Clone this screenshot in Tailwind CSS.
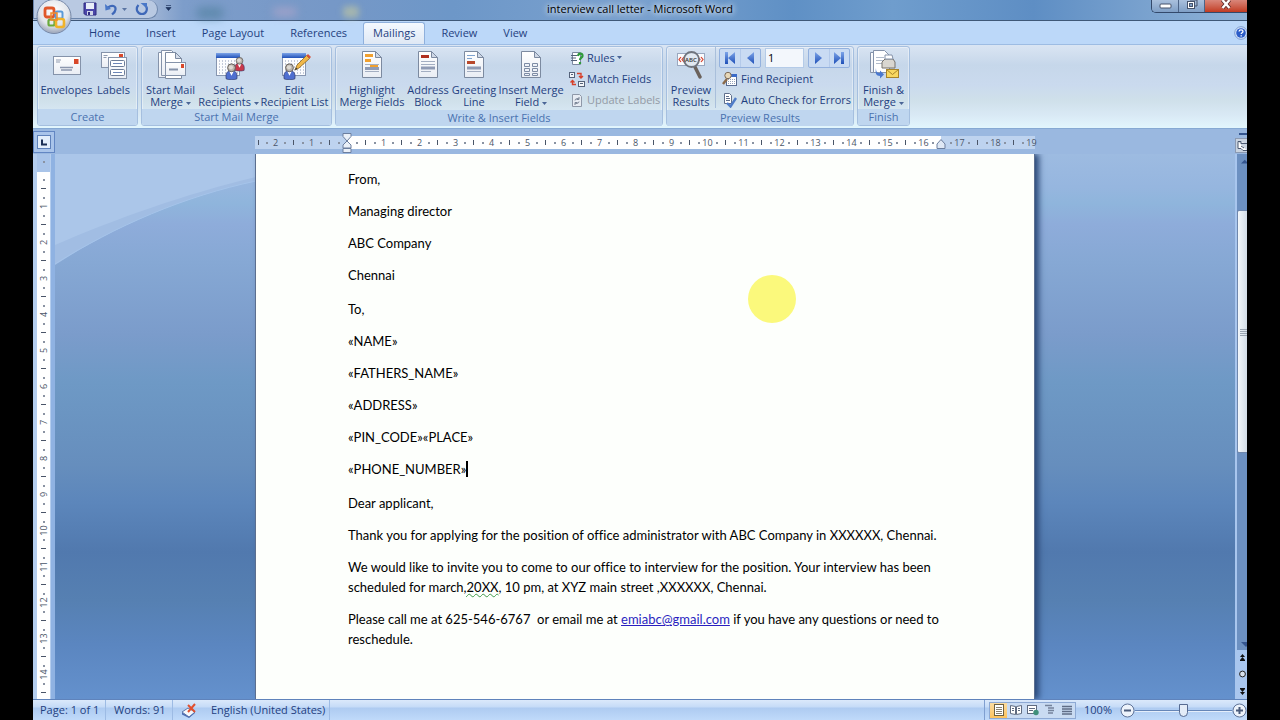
<!DOCTYPE html>
<html lang="en">
<head>
    <meta charset="UTF-8">
    <meta name="viewport" content="width=device-width, initial-scale=1.0">
    <title>interview call letter - Microsoft Word</title>
    <script src="https://cdn.jsdelivr.net/npm/@tailwindcss/browser@4"></script>
</head>
<body class="bg-black px-[33px] font-['Open_Sans','Noto_Sans',sans-serif] text-[11px] text-[#1f3f7f]">

    <!-- Shared icon parts -->
    <svg class="absolute size-0">
        <defs>
            <linearGradient id="paper" x1="0" y1="0" x2="0" y2="1"><stop offset="0" stop-color="#fff"/><stop offset="1" stop-color="#e9edf4"/></linearGradient>
            <linearGradient id="blue" x1="0" y1="0" x2="0" y2="1"><stop offset="0" stop-color="#7da4e8"/><stop offset="1" stop-color="#1f50b8"/></linearGradient>
            <symbol id="page" viewBox="0 0 32 32">
                <path d="M6.500 2.500h13l6 6v20h-19z" fill="url(#paper)" stroke="#7c8aa0"/>
                <path d="M19.500 2.500v6h6z" fill="#cfd8e6" stroke="#7c8aa0"/>
            </symbol>
            <symbol id="person" viewBox="0 0 12 16">
                <path d="M1 15c-1-5 1-8 5-8s6 3 5 8c-3 1-7 1-10 0z" fill="currentColor" stroke="#2a3566" stroke-width=".6"/>
                <path d="M4 8l2 4 2-4z" fill="#fff"/>
                <circle cx="6" cy="4.500" r="3.700" fill="#b9b3ac" stroke="#5b554f" stroke-width=".8"/>
                <circle cx="5.500" cy="4" r="2" fill="#dedad4"/>
            </symbol>
            <symbol id="calendar" viewBox="0 0 32 32">
                <rect x="3.500" y="4.500" width="23" height="22" fill="#fbfcfe" stroke="#8796b0"/>
                <rect x="3" y="4" width="24" height="5" fill="url(#blue)"/>
                <path d="M6 12h20M6 15h20M6 18h20M6 21h20M6 24h20" stroke="#8b99b5" stroke-dasharray="1 2"/>
            </symbol>
        </defs>
    </svg>

    <div class="flex h-screen flex-col overflow-hidden bg-[#9ab8e0]">

        <!-- Title bar -->
        <header class="relative flex h-[21px] shrink-0 items-start justify-center border-b border-[#3f5878] bg-[linear-gradient(90deg,#aebfda_0,#a9bbd8_110px,#7d9dca_150px,#7698c7_300px,#6d97c8_420px,#7ba2cf_600px,#5f90c5_760px,#6f9dcd_860px,#5e8ec4_1000px,#7ba3cf_1120px,#8fb2d6_1214px)]">
            <div class="absolute left-[163px] top-[7px] h-3 w-7 rounded-full bg-[#4f7f9c]/60 blur-[4px]"></div>
            <div class="absolute left-[240px] top-[8px] h-2 w-6 rounded-full bg-[#b3a7cb]/70 blur-[4px]"></div>
            <div class="absolute left-[310px] top-[6px] h-3 w-4 rounded-sm bg-[#c5c9a0]/60 blur-[3px]"></div>
            <div class="absolute left-0 top-0 flex h-[19px] items-center rounded-r-[12px] border border-t-0 border-[#6d86ac] bg-[#b9c9e2] pl-[49px] pr-2">
                <button aria-label="Save" class="mr-[7px]">
                    <svg width="14" height="14" viewBox="0 0 14 14"><path d="M1 1h12v12H2.500L1 11.500z" fill="#4b46a8" stroke="#2f2b80"/><rect x="3" y="1" width="8" height="6" fill="#e9eef8"/><rect x="4" y="9" width="6" height="4" fill="#cfd5e8"/><rect x="5" y="10" width="2" height="3" fill="#2f2b80"/></svg>
                </button>
                <button aria-label="Undo" class="mr-1">
                    <svg width="14" height="14" viewBox="0 0 14 14" fill="none"><path d="M4 5.500c4-3 8-1.500 7.500 2S8.500 12 8 12.500" stroke="#3f68b8" stroke-width="2.200"/><path d="M1 2l.5 6.500L7 7z" fill="#4a78c8"/></svg>
                </button>
                <button aria-label="Undo list" class="mr-2"><svg width="5" height="3" viewBox="0 0 5 3"><path d="M0 0h5L2.500 3z" fill="#5a74a3"/></svg></button>
                <button aria-label="Redo">
                    <svg width="14" height="14" viewBox="0 0 14 14" fill="none"><path d="M3.500 3C0 7 2.500 12 7 12s6.500-5.500 3-9" stroke="#3f68b8" stroke-width="2.200"/><path d="M5.500 1H12v5.500z" fill="#4a78c8"/></svg>
                </button>
            </div>
            <button aria-label="Customize Quick Access Toolbar" class="absolute left-[132px] top-[5px]">
                <svg width="7" height="6" viewBox="0 0 7 6"><path d="M1 .5h5M1 2.500h5L3.500 5.500z" fill="#1f355e" stroke="#1f355e" stroke-width=".7"/></svg>
            </button>
            <h1 class="leading-[18px] text-black [text-shadow:0_0_6px_#fff,0_0_6px_#dfe9f6]">interview call letter - Microsoft Word</h1>
            <div class="absolute right-0 top-0 flex h-[13px] overflow-hidden rounded-bl-[5px] border border-r-0 border-t-0 border-[#33496b]">
                <button aria-label="Minimize" class="flex w-[27px] items-start justify-center border-r border-[#4c6488] bg-linear-to-b from-[#a9c0dd] to-[#7f9fc6] pt-[3px]">
                    <svg width="13" height="6" viewBox="0 0 13 6"><rect x="1" y="1" width="11" height="4" rx="1" fill="#fff" stroke="#46536b"/></svg>
                </button>
                <button aria-label="Restore" class="flex w-[26px] items-start justify-center border-r border-[#4c6488] bg-linear-to-b from-[#a9c0dd] to-[#7f9fc6]">
                    <svg width="12" height="10" viewBox="0 0 12 10"><path d="M4 0h7v6H9" fill="none" stroke="#46536b"/><rect x="1.500" y="1.500" width="7" height="7" fill="#fff" stroke="#46536b"/><rect x="3.500" y="3.500" width="3" height="3" fill="#7f9fc6" stroke="#46536b"/></svg>
                </button>
                <button aria-label="Close" class="flex w-[42px] items-start justify-center bg-linear-to-b from-[#d9867a] to-[#c13a20]">
                    <svg width="12" height="10" viewBox="0 0 12 10"><path d="M2.500 0l7 8M9.500 0l-7 8" stroke="#5b2a2a" stroke-width="4"/><path d="M2.500 0l7 8M9.500 0l-7 8" stroke="#fff" stroke-width="2.400"/></svg>
                </button>
            </div>
            <button aria-label="Office Button" class="absolute left-[3px] top-[-2px] z-10">
                <svg width="36" height="37" viewBox="0 0 36 37" fill="none">
                    <defs><radialGradient id="orb" cx=".5" cy=".35" r=".6"><stop offset="0" stop-color="#fff"/><stop offset=".7" stop-color="#e3e6ec"/><stop offset="1" stop-color="#a8b1c2"/></radialGradient></defs>
                    <circle cx="18" cy="18.500" r="17" fill="url(#orb)" stroke="#7688a8"/>
                    <rect x="9" y="10" width="9" height="9" rx="2" stroke="#e0582a" stroke-width="2.800"/>
                    <rect x="19.500" y="13.500" width="7" height="7" rx="1.500" stroke="#5a9ad8" stroke-width="2"/>
                    <rect x="12.500" y="21.500" width="6" height="6" rx="1.500" stroke="#6aa93c" stroke-width="2.200"/>
                    <rect x="20" y="21" width="8" height="8" rx="2" stroke="#f0b32a" stroke-width="2.600"/>
                    <path d="M15 15h6v7h-6z" stroke="#f08a2a" stroke-width="1.500"/>
                </svg>
            </button>
        </header>

        <!-- Ribbon tabs -->
        <nav class="flex h-[23px] shrink-0 items-end bg-[#bcd8f9] pl-[43px]">
            <button class="h-[22px] px-[13px]">Home</button>
            <button class="h-[22px] px-[13px]">Insert</button>
            <button class="h-[22px] px-[13px]">Page Layout</button>
            <button class="h-[22px] px-[13px]">References</button>
            <button class="mx-[3px] h-[22px] rounded-t-[3px] border border-b-0 border-[#8fb0dc] bg-linear-to-b from-[#f4f9ff] to-[#dfe8f4] px-[9px]">Mailings</button>
            <button class="h-[22px] px-[13px]">Review</button>
            <button class="h-[22px] px-[13px]">View</button>
            <button aria-label="Help" class="-mr-px ml-auto self-center">
                <svg width="14" height="14" viewBox="0 0 14 14"><circle cx="7" cy="7" r="6.300" fill="#dbe8fa" stroke="#7b9bd0"/><circle cx="7" cy="7" r="4.800" fill="#2b5cc8"/><path d="M5 5.500c.3-2.300 4-2 4 0 0 1.200-1.800 1.300-1.800 2.500M7.200 9.200v1.300" fill="none" stroke="#fff" stroke-width="1.300"/></svg>
            </button>
        </nav>

        <!-- Ribbon -->
        <div class="flex h-[85px] shrink-0 gap-[3px] whitespace-nowrap border-b border-t border-b-[#86a9d3] border-t-[#9dbce3] bg-[linear-gradient(#dae5f3_0,#c6d7ea_20px,#cadaee_40px,#cfe0ea_55px,#d9e9f5_70px,#e2f6fd_83px)] px-[4px] pb-[2px] pt-px leading-3">
            <section class="flex w-[101px] flex-col rounded-[3px] border border-[#a5bfdf] shadow-[inset_0_0_0_1px_#ffffff66]">
                <div class="flex flex-1 items-start justify-center">
                    <button class="flex w-[52px] flex-col items-center gap-[3px] pt-[2px]">
                        <svg width="32" height="32" viewBox="0 0 32 32"><rect x="2.500" y="7.500" width="27" height="18" fill="url(#paper)" stroke="#8593aa"/><path d="M5 11h5M5 13h4" stroke="#8f9bb0"/><path d="M9 18.500h13M10 21h11" stroke="#8c97ae" stroke-width="1.500"/><rect x="23" y="10" width="4.500" height="5" fill="#d8482a"/></svg>
                        Envelopes
                    </button>
                    <button class="flex w-[42px] flex-col items-center gap-[3px] pt-[2px]">
                        <svg width="32" height="32" viewBox="0 0 32 32"><rect x="3.500" y="3.500" width="23" height="15" fill="url(#paper)" stroke="#8593aa"/><path d="M5.500 6.500h4M5.500 8.500h3" stroke="#8f9bb0"/><rect x="21" y="5" width="4" height="3" fill="#d8482a"/><rect x="10.500" y="8.500" width="18" height="21" fill="url(#paper)" stroke="#8593aa"/><rect x="12.500" y="11.500" width="14" height="6" rx="1" fill="#fff" stroke="#6d7d99"/><rect x="12.500" y="20.500" width="14" height="6" rx="1" fill="#fff" stroke="#6d7d99"/><path d="M15 14.500h9M15 23.500h9" stroke="#6d86b8"/></svg>
                        Labels
                    </button>
                </div>
                <h2 class="h-4 shrink-0 rounded-b-[2px] bg-[#bfd6ef] text-center leading-4 text-[#4a72b0]">Create</h2>
            </section>

            <section class="flex w-[191px] flex-col rounded-[3px] border border-[#a5bfdf] shadow-[inset_0_0_0_1px_#ffffff66]">
                <div class="flex flex-1 items-start justify-center">
                    <button class="flex w-[54px] flex-col items-center gap-[3px] pt-[2px]">
                        <svg width="32" height="32" viewBox="0 0 32 32"><path d="M3.500 3.500h10l4 4v21h-14z" fill="url(#paper)" stroke="#8593aa"/><path d="M6.500 1.500h10l4 4v21h-14z" fill="url(#paper)" stroke="#8593aa"/><path d="M10.500 3.500h10l6 6v20h-16z" fill="#fff" stroke="#7c8aa0"/><path d="M20.500 3.500v6h6z" fill="#d6deea" stroke="#7c8aa0"/><rect x="10.500" y="13.500" width="20" height="13" fill="url(#paper)" stroke="#8593aa"/><path d="M14 20.500h9" stroke="#8593aa" stroke-width="2"/><rect x="26" y="15" width="3" height="4" fill="#d8482a"/></svg>
                        <span>Start Mail<br>Merge <svg class="inline-block align-middle" width="5" height="3" viewBox="0 0 5 3"><path d="M0 0h5L2.500 3z" fill="#4a6596"/></svg></span>
                    </button>
                    <button class="flex w-[62px] flex-col items-center gap-[3px] pt-[2px]">
                        <svg width="32" height="32" viewBox="0 0 32 32"><use href="#calendar" width="32" height="32"/><use href="#person" x="21" y="7" width="11" height="16" class="text-[#c8384a]"/><use href="#person" x="12" y="14" width="13" height="17" class="text-[#4f6fd0]"/></svg>
                        <span>Select<br>Recipients <svg class="inline-block align-middle" width="5" height="3" viewBox="0 0 5 3"><path d="M0 0h5L2.500 3z" fill="#4a6596"/></svg></span>
                    </button>
                    <button class="flex w-[70px] flex-col items-center gap-[3px] pt-[2px]">
                        <svg width="32" height="32" viewBox="0 0 32 32"><use href="#calendar" width="32" height="32"/><use href="#person" x="4" y="14" width="13" height="17" class="text-[#4f6fd0]"/><path d="M16 21l2-5L27.500 6.500l3 3L20 19z" fill="#f0b84a" stroke="#8a6420" stroke-width=".8"/><path d="M27.500 6.500l1.500-1.500 3 3-1.500 1.500z" fill="#d8503a"/><path d="M16 21l1-2.500 1.500 1.500z" fill="#333"/></svg>
                        <span>Edit<br>Recipient List</span>
                    </button>
                </div>
                <h2 class="h-4 shrink-0 rounded-b-[2px] bg-[#bfd6ef] text-center leading-4 text-[#4a72b0]">Start Mail Merge</h2>
            </section>

            <section class="flex w-[328px] flex-col rounded-[3px] border border-[#a5bfdf] shadow-[inset_0_0_0_1px_#ffffff66]">
                <div class="flex flex-1 items-start pl-[3px]">
                    <button class="flex w-[66px] flex-col items-center gap-[3px] pt-[2px]">
                        <svg width="32" height="32" viewBox="0 0 32 32"><use href="#page" width="32" height="32"/><path d="M9 6.500h8M9 11.500h6" stroke="#f0a030" stroke-width="3"/><path d="M9 15.500h14M9 22.500h14" stroke="#a3aec2"/><path d="M14 17h8" stroke="#f0a030" stroke-width="2"/><path d="M9 19.500h14" stroke="#8f9bb5" stroke-width="3"/></svg>
                        <span>Highlight<br>Merge Fields</span>
                    </button>
                    <button class="flex w-[46px] flex-col items-center gap-[3px] pt-[2px]">
                        <svg width="32" height="32" viewBox="0 0 32 32"><use href="#page" width="32" height="32"/><path d="M9 7.500h8" stroke="#b03020" stroke-width="3"/><path d="M9 12.500h14M9 15.500h14M9 22.500h10" stroke="#a3aec2"/><path d="M9 19h14" stroke="#8f9bb5" stroke-width="3"/></svg>
                        <span>Address<br>Block</span>
                    </button>
                    <button class="flex w-[46px] flex-col items-center gap-[3px] pt-[2px]">
                        <svg width="32" height="32" viewBox="0 0 32 32"><use href="#page" width="32" height="32"/><path d="M9 6.500h8M9 9.500h5" stroke="#7fa3cf"/><path d="M9 13.500h8" stroke="#b8482c" stroke-width="3"/><path d="M9 22.500h14" stroke="#a3aec2"/><path d="M9 19h14" stroke="#8f9bb5" stroke-width="3"/></svg>
                        <span>Greeting<br>Line</span>
                    </button>
                    <button class="flex w-[68px] flex-col items-center gap-[3px] pt-[2px]">
                        <svg width="32" height="32" viewBox="0 0 32 32"><use href="#page" width="32" height="32"/><path d="M9.500 14.500h5v3h-5zM17.500 14.500h5v3h-5zM9.500 19.500h5v3h-5zM17.500 19.500h5v3h-5zM9.500 24.500h5v2h-5zM17.500 24.500h5v2h-5z" fill="#eef2f8" stroke="#7d8ba4"/></svg>
                        <span>Insert Merge<br>Field <svg class="inline-block align-middle" width="5" height="3" viewBox="0 0 5 3"><path d="M0 0h5L2.500 3z" fill="#4a6596"/></svg></span>
                    </button>
                    <div class="flex flex-col pl-1">
                        <button class="flex h-[21px] items-center gap-[2px]">
                            <svg width="16" height="16" viewBox="0 0 16 16"><path d="M3.500 2.500h8v12h-8z" fill="#fff" stroke="#7c8aa0"/><path d="M2 5.500h6M2 8h5M2 10.500h6" stroke="#55627a"/><path d="M9 6c.5-3.500 5-3 4.500 0-.3 1.600-2.500 2-2.500 4M11 12v2" fill="none" stroke="#2f9a3a" stroke-width="2.200"/></svg>
                            Rules <svg width="5" height="3" viewBox="0 0 5 3"><path d="M0 0h5L2.500 3z" fill="#4a6596"/></svg>
                        </button>
                        <button class="flex h-[21px] items-center gap-[2px]">
                            <svg width="16" height="16" viewBox="0 0 16 16"><rect x=".5" y="1.500" width="5" height="5" fill="#f4f6fa" stroke="#55627a"/><rect x="9.500" y="10.500" width="6" height="5" fill="#f4f6fa" stroke="#55627a"/><path d="M2 3.500h2M11 12.500h3" stroke="#55627a"/><path d="M8 2.500h4V6M10 5l2 2 2-2M7 13.500H3.500V10M1.500 11.500l2-2 2 2" fill="none" stroke="#d8402a" stroke-width="1.400"/></svg>
                            Match Fields
                        </button>
                        <button class="flex h-[21px] items-center gap-[2px] text-[#939aa6]" disabled>
                            <svg width="16" height="16" viewBox="0 0 16 16" fill="none"><path d="M3.500 2.500h7l2 2v10h-9z" fill="#e7ecf3" stroke="#8e98a8"/><path d="M6 8.500c0-2 3-2.500 4-1.500M10 5v2.500H7.500M10 9.500c0 2-3 2.500-4 1.500M6 13v-2.500h2.500" stroke="#7a8596"/></svg>
                            Update Labels
                        </button>
                    </div>
                </div>
                <h2 class="h-4 shrink-0 rounded-b-[2px] bg-[#bfd6ef] text-center leading-4 text-[#4a72b0]">Write &amp; Insert Fields</h2>
            </section>

            <section class="flex w-[188px] flex-col rounded-[3px] border border-[#a5bfdf] shadow-[inset_0_0_0_1px_#ffffff66]">
                <div class="flex flex-1 items-start">
                    <button class="flex h-[61px] w-[49px] flex-col items-center gap-[3px] border-r border-[#a9bfdb] pt-[2px]">
                        <svg width="32" height="32" viewBox="0 0 32 32" fill="none"><rect x="2.500" y="4.500" width="27" height="12" fill="#fafbfd" stroke="#9aa8bf"/><path d="M6 8l-2 2.500L6 13M9 8l-2 2.500L9 13M23 8l2 2.500-2 2.500M26 8l2 2.500-2 2.500" stroke="#d8402a" stroke-width="1.200"/><path d="M20 18l5 10" stroke="#6b625c" stroke-width="3.500" stroke-linecap="round"/><circle cx="16.500" cy="10.500" r="7.500" fill="#dfe7f0" fill-opacity=".9" stroke="#70757e" stroke-width="1.800"/><text x="10" y="13" font-size="6" font-weight="600" fill="#333">ABC</text></svg>
                        <span>Preview<br>Results</span>
                    </button>
                    <div class="flex flex-col pl-[3px]">
                        <div class="flex h-[21px] gap-1 pt-px">
                            <div class="flex w-[42px] rounded-[2px] border border-[#93b1de] bg-[#c9dbf3]">
                                <button aria-label="First Record" class="flex flex-1 items-center justify-center border-r border-[#b4caea]"><svg width="10" height="12" viewBox="0 0 10 12"><path d="M0 0h3v12H0zM10 0v12L3 6z" fill="url(#blue)"/></svg></button>
                                <button aria-label="Previous Record" class="flex flex-1 items-center justify-center"><svg width="7" height="12" viewBox="0 0 7 12"><path d="M7 0v12L0 6z" fill="url(#blue)"/></svg></button>
                            </div>
                            <input type="text" value="1" aria-label="Record" class="w-[39px] border border-[#b4cbe8] bg-[#f3f7fc] pl-[2px] text-black outline-none">
                            <div class="flex w-[42px] rounded-[2px] border border-[#93b1de] bg-[#c9dbf3]">
                                <button aria-label="Next Record" class="flex flex-1 items-center justify-center border-r border-[#b4caea]"><svg width="7" height="12" viewBox="0 0 7 12"><path d="M0 0v12l7-6z" fill="url(#blue)"/></svg></button>
                                <button aria-label="Last Record" class="flex flex-1 items-center justify-center"><svg width="10" height="12" viewBox="0 0 10 12"><path d="M7 0h3v12H7zM0 0v12l7-6z" fill="url(#blue)"/></svg></button>
                            </div>
                        </div>
                        <button class="flex h-[21px] items-center gap-[3px] pl-[3px]">
                            <svg width="16" height="16" viewBox="0 0 16 16"><rect x="4.500" y="3.500" width="10" height="11" fill="#fff" stroke="#5a6d92"/><rect x="8" y="3" width="7" height="3" fill="#3c6cc8"/><path d="M6 8.500h8M6 10.500h8M6 12.500h8" stroke="#93a1bb" stroke-dasharray="1 1"/><path d="M1 13l4-5" stroke="#8a6a4a" stroke-width="2.500"/><circle cx="6" cy="4.500" r="3.200" fill="#e8d8b8" stroke="#7c6a58"/></svg>
                            Find Recipient
                        </button>
                        <button class="flex h-[21px] items-center gap-[3px] pl-[3px]">
                            <svg width="16" height="16" viewBox="0 0 16 16"><path d="M2.500 1.500h5l2 2v8h-7z" fill="#fff" stroke="#5f6f8c"/><path d="M4 4.500h3M4 6.500h4M4 8.500h4" stroke="#5f6f8c"/><path d="M5 11l3.500 3.500L14 6" fill="none" stroke="#4f7cc8" stroke-width="2.400"/></svg>
                            Auto Check for Errors
                        </button>
                    </div>
                </div>
                <h2 class="h-4 shrink-0 rounded-b-[2px] bg-[#bfd6ef] text-center leading-4 text-[#4a72b0]">Preview Results</h2>
            </section>

            <section class="flex w-[53px] flex-col rounded-[3px] border border-[#a5bfdf] shadow-[inset_0_0_0_1px_#ffffff66]">
                <div class="flex flex-1 items-start justify-center">
                    <button class="flex flex-col items-center gap-[3px] pt-[2px]">
                        <svg width="32" height="32" viewBox="0 0 32 32"><path d="M2.500 3.500h11l3 3v17h-14z" fill="url(#paper)" stroke="#8593aa"/><path d="M5.500 1.500h11l5 5v17h-16z" fill="#fff" stroke="#8593aa"/><path d="M8 8.500h8M8 11.500h8M8 14.500h6" stroke="#b1bbcb"/><path d="M14 13l3-3h8l2 3v6H14z" fill="#d9d6d0" stroke="#77736c"/><path d="M17 10V6h7l1 4z" fill="#fff" stroke="#8593aa"/><rect x="18.500" y="20.500" width="12" height="8" fill="#f8d860" stroke="#a8842a"/><path d="M18.500 20.500l6 5 6-5" fill="none" stroke="#a8842a"/><path d="M8 19c0 4 1 5 4 5v-2.500l4 4-4 4V27c-4 0-5-3-4-8z" fill="#4a78d0"/></svg>
                        <span>Finish &amp;<br>Merge <svg class="inline-block align-middle" width="5" height="3" viewBox="0 0 5 3"><path d="M0 0h5L2.500 3z" fill="#4a6596"/></svg></span>
                    </button>
                </div>
                <h2 class="h-4 shrink-0 rounded-b-[2px] bg-[#bfd6ef] text-center leading-4 text-[#4a72b0]">Finish</h2>
            </section>
        </div>

        <!-- Horizontal ruler -->
        <div class="flex h-[25px] shrink-0 bg-[#9ab8e0]">
            <button aria-label="Tab selector" class="mt-[2px] flex h-[22px] w-[22px] shrink-0 items-center justify-center border border-[#6286c3] bg-[#a9c4ea]">
                <svg width="14" height="14" viewBox="0 0 14 14"><rect x=".5" y=".5" width="13" height="13" fill="#e3eefb" stroke="#5f82bb"/><path d="M5 4.500v5h5" fill="none" stroke="#1c2f55" stroke-width="2"/></svg>
            </button>
            <div class="flex flex-1 justify-center">
                <div class="relative mt-[7px] h-[13px] w-[780px] bg-[linear-gradient(90deg,#bed3ef_92px,#fff_92px,#fff_686px,#bed3ef_686px)]">
                    <div id="hRuler" class="flex h-full text-[9px] leading-[13px] text-[#4a5568]"></div>
                    <svg class="absolute left-[87px] top-[-3px]" width="10" height="20" viewBox="0 0 10 20"><path d="M1 .5h8v3L5 8 1 3.500zM1 15v-3L5 8l4 4v3zM1 15.500h8v4H1z" fill="#eaf0f8" stroke="#6c7f9f"/></svg>
                    <svg class="absolute left-[681px] top-[3px]" width="10" height="10" viewBox="0 0 10 10"><path d="M1 9.500V5l4-4.500L9 5v4.500z" fill="#dfe8f5" stroke="#6c7f9f"/></svg>
                </div>
            </div>
            <div class="flex w-[12px] shrink-0 flex-col items-end overflow-hidden pt-[4px]">
                <div class="mb-[3px] h-[2px] w-[8px] shrink-0 bg-[#34558f]"></div>
                <button aria-label="View Ruler" class="self-start"><svg width="12" height="15" viewBox="0 0 12 15"><rect x=".5" y=".5" width="14" height="14" fill="#c9d3e0" stroke="#8b9ab3"/><path d="M3 3.500h3v2h6M3 3.500v7h3l2 2h4M6 8l3 2" fill="#fff" stroke="#4b5870"/></svg></button>
            </div>
        </div>

        <!-- Workspace -->
        <div class="flex min-h-0 flex-1">
            <div class="w-[22px] shrink-0 overflow-hidden border-r-4 border-[#8fb2e2] bg-[#b4cdee] pl-1 pr-[1px]">
                <div id="vRuler" class="flex h-full w-[13px] flex-col bg-[linear-gradient(#a9c4e9_18px,#fff_18px)] pt-[3px] text-[9px] leading-[9px] text-[#4a5568]"></div>
            </div>

            <main class="relative flex flex-1 justify-center overflow-hidden bg-[linear-gradient(#9dbbe1_0,#96b6df_6%,#8fb5dc_9%,#8eacda_13%,#86a8d4_20%,#7b9ccb_33%,#6e99c5_42%,#668ebd_57%,#5c86bb_64%,#5179ae_73%,#5680b2_82%,#5b86c0_90%,#6491cd_100%)]">
                <svg class="absolute left-0 top-0" width="201" height="112" viewBox="0 0 201 112" fill="none"><path d="M0 0h201v27C130 42 60 72 0 111z" fill="#a1bde3"/><path d="M0 0h201v23C130 40 60 65 0 91z" fill="#abc6e9"/><path d="M0 110C60 72 130 42 201 27" stroke="#a5c4ea"/></svg>

                <article class="relative w-[780px] border-x border-[#5c6f8f] bg-[#fdfffc] pl-[92px] pr-[90px] pt-[15px] font-['Lato','Open_Sans',sans-serif] text-[13px] leading-5 text-black shadow-[4px_0_6px_#2c4a78] [font-variant-ligatures:none]">
                    <div class="mb-[14px] space-y-3">
                        <p>From,</p>
                        <p>Managing director</p>
                        <p>ABC Company</p>
                        <p>Chennai</p>
                    </div>
                    <div class="mb-[14px] space-y-3">
                        <p>To,</p>
                        <p>«NAME»</p>
                        <p>«FATHERS_NAME»</p>
                        <p>«ADDRESS»</p>
                        <p>«PIN_CODE»«PLACE»</p>
                        <p class="flex items-center">«PHONE_NUMBER»<span class="h-4 w-[2px] bg-black"></span></p>
                    </div>
                    <div class="space-y-3 whitespace-nowrap">
                        <p>Dear applicant,</p>
                        <p>Thank you for applying for the position of office administrator with ABC Company in XXXXXX, Chennai.</p>
                        <p>We would like to invite you to come to our office to interview for the position. Your interview has been<br>scheduled for march<span class="underline decoration-[#3f9a4a] decoration-wavy decoration-1">,20XX</span>, 10 pm, at XYZ main street ,XXXXXX, Chennai.</p>
                        <p>Please call me at 625-546-6767&nbsp; or email me at <a href="mailto:emiabc@gmail.com" class="text-[#2a1fc0] underline">emiabc@gmail.com</a> if you have any questions or need to<br>reschedule.</p>
                    </div>
                    <!-- Pointer highlight -->
                    <div class="absolute left-[492px] top-[121px] size-12 rounded-full bg-[#fbf97c]"></div>
                </article>
            </main>

            <!-- Vertical scrollbar -->
            <div class="flex w-[12px] shrink-0 flex-col overflow-hidden border-l-2 border-[#a9c6ee] bg-[#6c90c1]">
                <button aria-label="Scroll up" class="ml-1 flex h-[56px] shrink-0 pt-[5px]"><svg width="8" height="5" viewBox="0 0 8 5"><path d="M0 5l5-5 5 5z" fill="#34558f"/></svg></button>
                <div class="flex h-[243px] shrink-0 items-center justify-end rounded-l-[2px] border border-r-0 border-[#6f87ad] bg-linear-to-r from-[#f3f7fb] to-[#d3dde8]">
                    <svg width="7" height="8" viewBox="0 0 7 8"><path d="M0 1.500h7M0 3.500h7M0 5.500h7M0 7.500h7" stroke="#9aa5b2"/></svg>
                </div>
                <div class="flex-1"></div>
                <button aria-label="Scroll down" class="ml-1 h-[12px] shrink-0"><svg width="8" height="5" viewBox="0 0 8 5"><path d="M0 0h10L5 5z" fill="#34558f"/></svg></button>
                <div class="flex h-[49px] shrink-0 flex-col items-end justify-around bg-[#a9c6ee] pr-px">
                    <button aria-label="Previous page"><svg width="7" height="8" viewBox="0 0 7 8"><path d="M3.500 0L6 3H1zM3.500 3L6 6H1zM1 6h5v1H1z" fill="#111"/></svg></button>
                    <button aria-label="Select Browse Object"><svg width="7" height="8" viewBox="0 0 7 8"><circle cx="3.500" cy="4" r="2.900" fill="#d9e2ee" stroke="#222"/></svg></button>
                    <button aria-label="Next page"><svg width="7" height="8" viewBox="0 0 7 8"><path d="M3.500 5L6 2H1zM3.500 8L6 5H1zM1 1h5v1H1z" fill="#111"/></svg></button>
                </div>
            </div>
        </div>

        <!-- Status bar -->
        <footer class="flex h-[21px] shrink-0 items-center border-t border-[#5f83bb] bg-[linear-gradient(#dbe9fb_0,#c5dbf7_7px,#aecbf1_8px,#c0dafa_20px)] pl-[7px]">
            <button class="w-[65px] text-left">Page: 1 of 1</button>
            <button class="h-full w-[67px] border-l border-[#9dbbe4] pl-2 text-left">Words: 91</button>
            <button aria-label="Proofing errors" class="flex h-full w-[39px] items-center border-l border-[#9dbbe4] pl-[8px]">
                <svg width="16" height="15" viewBox="0 0 16 15"><path d="M1 9l6-4 7 4-6 5z" fill="#f4f7fc" stroke="#5f77a8"/><path d="M1 9.500v2L8 15l6-5V9l-6 5z" fill="#4a6ab0"/><path d="M7 2l7 7M14 1L7 9" stroke="#e05030" stroke-width="2"/></svg>
            </button>
            <button class="h-full w-[119px] whitespace-nowrap border-r border-[#9dbbe4] text-left">English (United States)</button>
            <div class="ml-auto flex h-full items-center border-l border-[#7f9fd0] pl-1">
                <div class="flex h-[17px] border border-[#8da9d4] bg-[#c9dbf2]">
                    <button aria-label="Print Layout" class="flex w-[17px] items-center justify-center bg-linear-to-b from-[#fbdca0] to-[#fdc25a]"><svg width="12" height="12" viewBox="0 0 12 12"><rect x="1.500" y=".5" width="9" height="11" fill="#fff" stroke="#6d6040"/><path d="M3 3.500h6M3 5.500h6M3 7.500h6M3 9.500h6" stroke="#8b8370"/></svg></button>
                    <button aria-label="Full Screen Reading" class="flex w-[17px] items-center justify-center"><svg width="12" height="12" viewBox="0 0 12 12"><path d="M.5 1.500l5 1v8l-5-1zM11.500 1.500l-5 1v8l5-1z" fill="#fff" stroke="#5f6b80"/><path d="M2 4.500h2M2 6.500h2M8 4.500h2M8 6.500h2" stroke="#5f6b80"/></svg></button>
                    <button aria-label="Web Layout" class="flex w-[17px] items-center justify-center"><svg width="12" height="12" viewBox="0 0 12 12"><rect x=".5" y="1.500" width="9" height="8" fill="#fff" stroke="#5f6b80"/><path d="M2 4.500h6M2 6.500h4" stroke="#5f6b80"/><circle cx="9" cy="8.500" r="2.700" fill="#3f8f7a"/></svg></button>
                    <button aria-label="Outline" class="flex w-[17px] items-center justify-center"><svg width="12" height="12" viewBox="0 0 12 12"><path d="M1 1.500h7M4 4h6M4 6.500h6M4 9h5" stroke="#75839c" stroke-width="1.300"/></svg></button>
                    <button aria-label="Draft" class="flex w-[17px] items-center justify-center"><svg width="12" height="12" viewBox="0 0 12 12"><path d="M1 2.500h10M1 5h10M1 7.500h10M1 10h10" stroke="#5f6d87" stroke-width="1.500"/></svg></button>
                </div>
                <button class="w-[44px] text-center">100%</button>
                <button aria-label="Zoom Out"><svg width="15" height="15" viewBox="0 0 15 15"><circle cx="7.500" cy="7.500" r="6.500" fill="#edf3fb" stroke="#5f7398"/><path d="M4 7.500h7" stroke="#4b5c7c" stroke-width="2"/></svg></button>
                <input type="range" min="10" max="190" value="100" aria-label="Zoom" class="h-[15px] w-[97px] appearance-none bg-[linear-gradient(transparent_7px,#6686b8_7px,#6686b8_8px,#e4eefb_8px,#e4eefb_9px,transparent_9px)] [&::-webkit-slider-thumb]:h-[13px] [&::-webkit-slider-thumb]:w-[9px] [&::-webkit-slider-thumb]:appearance-none [&::-webkit-slider-thumb]:rounded-b-[5px] [&::-webkit-slider-thumb]:border [&::-webkit-slider-thumb]:border-[#566b92] [&::-webkit-slider-thumb]:bg-[#e3ecf8]">
                <button aria-label="Zoom In"><svg width="15" height="15" viewBox="0 0 15 15"><circle cx="7.500" cy="7.500" r="6.500" fill="#edf3fb" stroke="#5f7398"/><path d="M4 7.500h7M7.500 4v7" stroke="#4b5c7c" stroke-width="2"/></svg></button>
            </div>
        </footer>
    </div>

    <script>
        // Each centimetre has four slots: number, dot, half tick, dot
        function horizontalSlot(content, width) {
            return `<span class="flex shrink-0 items-center justify-center ${width}">${content}</span>`;
        }

        function buildHorizontalRuler() {
            const dot = '<i class="size-[2px] bg-[#8a93a3]"></i>';
            const tick = '<i class="h-[5px] w-px bg-[#4a5568]"></i>';
            let html = horizontalSlot(tick, 'w-[7px]') + horizontalSlot(dot, 'w-[9px]');
            for (let cm = -2; cm <= 19; cm++) {
                html += horizontalSlot(cm === 0 ? '' : Math.abs(cm), 'w-[9px]');
                if (cm < 19) {
                    html += horizontalSlot(dot, 'w-[9px]') + horizontalSlot(tick, 'w-[9px]') + horizontalSlot(dot, 'w-[9px]');
                }
            }
            document.getElementById('hRuler').innerHTML = html;
        }

        function buildVerticalRuler() {
            const slot = content => `<span class="flex h-[9px] shrink-0 items-center justify-center">${content}</span>`;
            const dot = slot('<i class="size-[2px] bg-[#8a93a3]"></i>');
            const tick = slot('<i class="h-px w-[5px] bg-[#4a5568]"></i>');
            let html = dot;
            for (let cm = 0; cm <= 14; cm++) {
                html += slot(cm === 0 ? '' : `<b class="-rotate-90 font-normal">${cm}</b>`) + dot + tick + (cm < 14 ? dot : '');
            }
            document.getElementById('vRuler').innerHTML = html;
        }

        buildHorizontalRuler();
        buildVerticalRuler();
    </script>
</body>
</html>
